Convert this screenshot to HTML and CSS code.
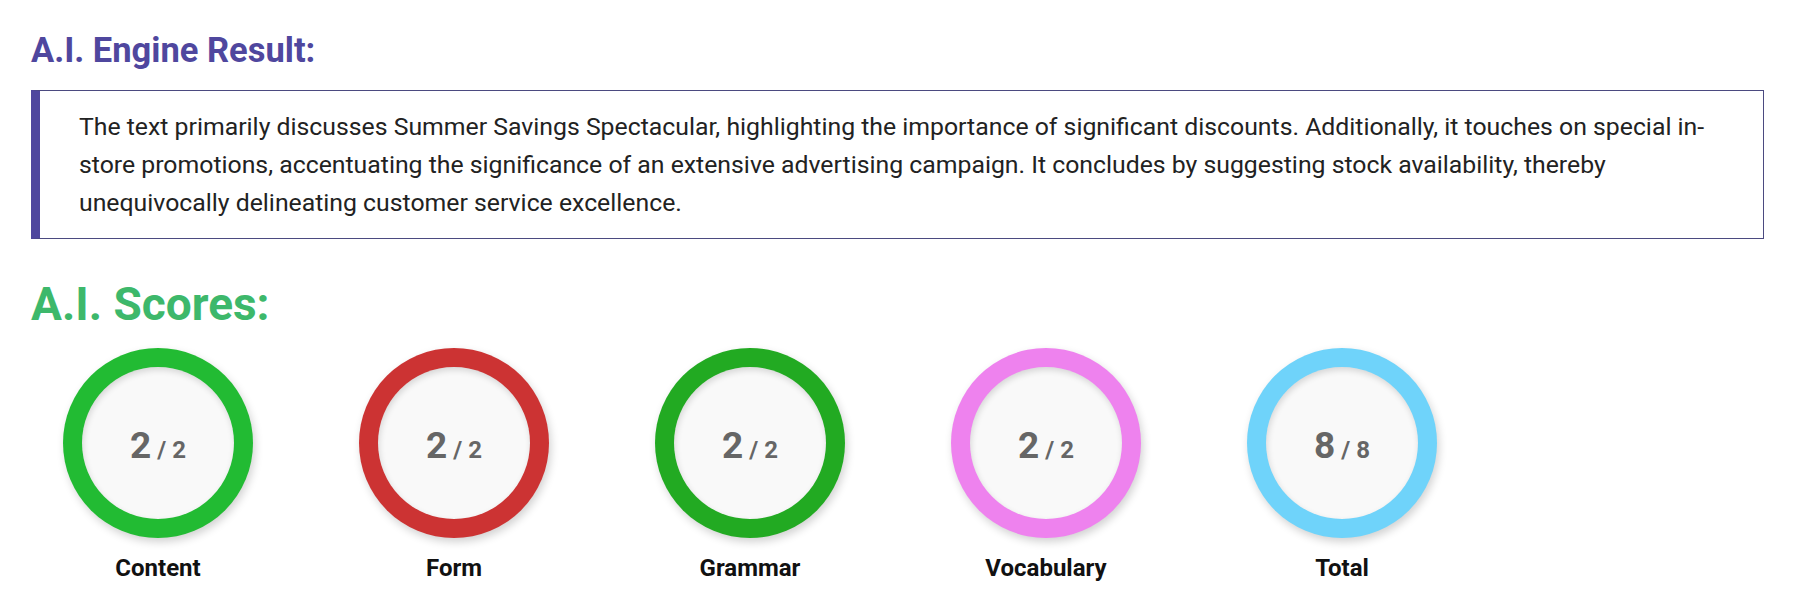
FILE: index.html
```html
<!DOCTYPE html>
<html lang="en">
<head>
  <meta charset="UTF-8">
  <meta name="viewport" content="width=device-width, initial-scale=1.0">
  <title>A.I. Engine Result</title>
  <link rel="stylesheet" href="styles.css">
</head>
<body>
  <h2 class="engine-title">A.I. Engine Result:</h2>

  <div class="engine-result">
    The text primarily discusses Summer Savings Spectacular, highlighting the importance of significant discounts. Additionally, it touches on special in-store promotions, accentuating the significance of an extensive advertising campaign. It concludes by suggesting stock availability, thereby unequivocally delineating customer service excellence.
  </div>

  <h2 class="scores-title">A.I. Scores:</h2>

  <div class="scores">
    <div class="score">
      <div class="ring content"><div class="ring-inner">2<span class="max"> / 2</span></div></div>
      <div class="score-label">Content</div>
    </div>
    <div class="score">
      <div class="ring form"><div class="ring-inner">2<span class="max"> / 2</span></div></div>
      <div class="score-label">Form</div>
    </div>
    <div class="score">
      <div class="ring grammar"><div class="ring-inner">2<span class="max"> / 2</span></div></div>
      <div class="score-label">Grammar</div>
    </div>
    <div class="score">
      <div class="ring vocabulary"><div class="ring-inner">2<span class="max"> / 2</span></div></div>
      <div class="score-label">Vocabulary</div>
    </div>
    <div class="score">
      <div class="ring total"><div class="ring-inner">8<span class="max"> / 8</span></div></div>
      <div class="score-label">Total</div>
    </div>
  </div>
</body>
</html>
```

FILE: styles.css
```css
body { font-family: Roboto, "Noto Sans", sans-serif; margin: 0; padding: 0 36px 0 31px; background: #fff; color: #222; }

.engine-title { font-size: 34.5px; line-height: 40px; font-weight: 700; color: #4f479e; margin: 30px 0 20px; }
.engine-result {
  border: 1px solid #4b4a80;
  border-left: 9px solid #4f479e;
  padding: 17px 30px 16px 39px;
  font-size: 24.8px;
  line-height: 38px;
  color: #222;
}

.scores-title { font-size: 46px; line-height: 54px; font-weight: 700; color: #3db86b; margin: 38px 0 17px; }

.scores { display: flex; gap: 42px; }
.score { width: 254px; display: flex; flex-direction: column; align-items: center; }
.ring {
  width: 190px;
  height: 190px;
  box-sizing: border-box;
  padding: 19px;
  border-radius: 50%;
  box-shadow: 2px 4px 8px rgba(0, 0, 0, 0.18);
}
.ring-inner {
  width: 152px;
  height: 152px;
  border-radius: 50%;
  background: #f9f9f9;
  box-shadow: inset 1px 3px 6px rgba(0, 0, 0, 0.14);
  display: flex;
  align-items: baseline;
  justify-content: center;
  padding-top: 57px;
  box-sizing: border-box;
  font-size: 37px;
  line-height: 44px;
  font-weight: 700;
  color: #666;
}
.ring-inner .max { font-size: 24px; white-space: pre; }
.ring.content { background: #22bb33; }
.ring.form { background: #cc3333; }
.ring.grammar { background: #22aa22; }
.ring.vocabulary { background: #ee82ee; }
.ring.total { background: #6fd3fa; }
.score-label { margin-top: 16px; font-size: 24px; line-height: 28px; font-weight: 700; color: #111; }
```
